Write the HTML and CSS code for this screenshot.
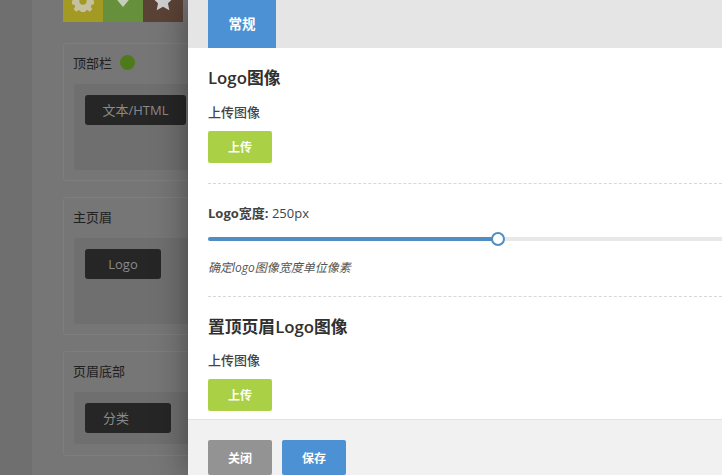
FILE: index.html
```html
<!DOCTYPE html>
<html lang="zh">
<head>
<meta charset="utf-8">
<title>Logo</title>
<link rel="stylesheet" href="styles.css">
</head>
<body>
<div class="page">
  <aside class="backdrop">
    <div class="rail"></div>
    <div class="builder">
      <div class="tiles">
        <div class="tile yellow"><svg viewBox="0 0 24 24" width="22" height="22"><path fill="#c4c0a0" fill-rule="evenodd" d="M10 1h4l.6 3 2.200.9 2.600-1.700 2.800 2.800-1.700 2.600.9 2.200 3 .6v4l-3 .6-.9 2.200 1.700 2.600-2.800 2.800-2.600-1.700-2.200.9-.6 3h-4l-.6-3-2.200-.9-2.600 1.700-2.800-2.800 1.700-2.600-.9-2.200-3-.6v-4l3-.6.9-2.200L1.800 6l2.800-2.800 2.600 1.700L9.400 4zM12 8a4 4 0 1 0 0 8 4 4 0 0 0 0-8z"/></svg></div>
        <div class="tile green"><svg viewBox="0 0 24 24" width="14" height="18"><path fill="#c4ceb8" d="M8 0h8v12h6L12 24 2 12h6z"/></svg></div>
        <div class="tile brown"><svg viewBox="0 0 24 24" width="22" height="22"><path fill="#cfcfcf" d="M12 1l3.400 7.200 7.600 1-5.600 5.300 1.500 7.700L12 18.400l-6.900 3.800 1.500-7.700L1 9.200l7.600-1z"/></svg></div>
      </div>
      <section class="card">
        <h3 class="card-title">顶部栏 <span class="dot"></span></h3>
        <div class="well tall"><div class="chip w-html">文本/HTML</div></div>
      </section>
      <section class="card">
        <h3 class="card-title">主页眉</h3>
        <div class="well tall"><div class="chip w-logo">Logo</div></div>
      </section>
      <section class="card">
        <h3 class="card-title">页眉底部</h3>
        <div class="well short"><div class="chip w-cat">分类</div></div>
      </section>
    </div>
  </aside>
  <main class="modal">
    <nav class="tabs"><a class="tab">常规</a></nav>
    <div class="body">
      <section class="group first">
        <h2 class="heading">Logo图像</h2>
        <div class="label">上传图像</div>
        <button class="btn green-btn">上传</button>
      </section>
      <section class="group slider-group">
        <div class="value"><strong>Logo宽度:</strong> 250px</div>
        <div class="slider"><div class="fill"></div><span class="thumb"></span></div>
        <p class="hint">确定logo图像宽度单位像素</p>
      </section>
      <section class="group last">
        <h2 class="heading tight">置顶页眉Logo图像</h2>
        <div class="label">上传图像</div>
        <button class="btn green-btn">上传</button>
      </section>
    </div>
    <footer class="foot">
      <button class="btn gray-btn">关闭</button>
      <button class="btn blue-btn">保存</button>
    </footer>
  </main>
</div>
</body>
</html>
```

FILE: styles.css
```css
* { box-sizing: border-box; }
html, body { margin: 0; height: 100%; overflow: hidden; }
body { font-family: "Open Sans", "Noto Sans CJK SC", sans-serif; color: #333; background: #fff; }
.page { display: flex; width: 722px; height: 475px; overflow: hidden; }

.backdrop { width: 188px; flex: none; display: flex; background: #767676; overflow: hidden; }
.rail { width: 32px; flex: none; background: #6f6f6f; }
.builder { width: 156px; flex: none; padding-left: 31px; }
.tiles { display: flex; width: 120px; height: 22px; margin-bottom: 21px; }
.tile { width: 40px; height: 22px; display: flex; justify-content: center; align-items: flex-end; overflow: hidden; }
.tile svg { flex: none; margin-bottom: 10px; }
.tile.green svg { margin-bottom: 13px; }
.yellow { background: #a39a24; }
.green { background: #67903c; }
.brown { background: #5b4236; }

.card { width: 300px; padding: 10px; margin-bottom: 16px; border: 1px solid #7e7e7e; border-radius: 3px; background: #767676; }
.card-title { margin: 0 0 12px -1px; height: 18px; font-size: 13px; line-height: 18px; font-weight: 400; color: #202020; display: flex; align-items: center; gap: 8px; }
.dot { width: 15px; height: 15px; border-radius: 50%; background: #507a1a; margin-top: -2px; }
.well { padding: 11px; background: #6f6f6f; border-radius: 3px; height: 52px; }
.well.short { margin-bottom: 1px; }
.well.tall { height: 86px; }
.chip { height: 30px; line-height: 30px; background: #262626; color: #8a8a8a; font-size: 13px; text-align: center; border-radius: 3px; }
.w-html { width: 101px; }
.w-logo { width: 76px; }
.w-cat { width: 86px; padding-right: 24px; }

.modal { flex: 1; min-width: 0; display: flex; flex-direction: column; background: #fff; box-shadow: 0 0 32px rgba(0,0,0,.4); position: relative; }
.tabs { height: 48px; flex: none; background: #e5e5e5; padding-left: 20px; }
.tab { display: block; width: 68px; height: 48px; line-height: 48px; background: #4b91d3; color: #fff; font-size: 13.500px; font-weight: 700; text-align: center; }
.body { flex: 1; min-height: 0; padding: 0 0 0 20px; overflow: hidden; }
.group { border-bottom: 1px dashed #d8d8d8; }
.group.first { height: 136px; padding-top: 19px; }
.group.slider-group { height: 113px; padding-top: 20px; }
.group.last { border: 0; padding-top: 19px; }
.heading { margin: 0 0 14px; font-size: 16.800px; line-height: 22px; font-weight: 600; color: #303030; }
.heading.tight { margin-bottom: 13px; }
.label { margin-bottom: 10px; font-size: 13px; line-height: 18px; font-weight: 500; color: #444; }
.btn { display: block; width: 64px; height: 32px; border: 0; border-radius: 2px; color: #fff; font: 700 12px "Open Sans", "Noto Sans CJK SC", sans-serif; padding: 0; }
.green-btn { background: #aad046; }
.gray-btn { background: #939393; }
.blue-btn { background: #4b91d3; }
.value { font-size: 13px; line-height: 18px; color: #444; }
.value strong { font-weight: 700; }
.slider { position: relative; height: 4px; margin-top: 15px; background: #e8e8e8; border-radius: 2px 0 0 2px; }
.fill { width: 290px; height: 4px; background: #4f8dc2; border-radius: 2px; }
.thumb { position: absolute; left: 283px; top: -5px; width: 14px; height: 14px; border: 2px solid #4f8dc2; border-radius: 50%; background: #fff; }
.hint { margin: 18px 0 0; font-size: 12px; line-height: 18px; font-style: italic; color: #555; }
.foot { height: 56px; flex: none; display: flex; gap: 10px; padding: 20px 0 0 20px; background: #f1f1f1; border-top: 1px solid #e2e2e2; }
.foot .btn { height: 35px; flex: none; }
```
